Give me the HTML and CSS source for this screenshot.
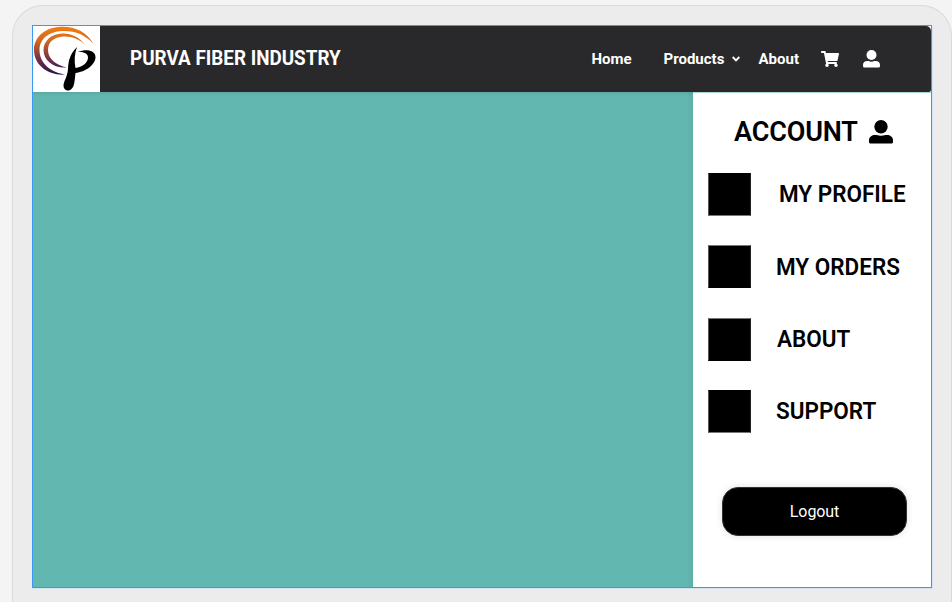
FILE: index.html
```html
<!DOCTYPE html>
<html lang="en">
<head>
<meta charset="utf-8">
<title>Purva Fiber Industry</title>
<link rel="stylesheet" href="styles.css">
</head>
<body>
<div class="device">
  <div class="screen">
    <header class="navbar">
      <svg class="logo" viewBox="0 0 67 66" role="img" aria-label="Purva logo">
        <defs>
          <linearGradient id="swirl" gradientUnits="userSpaceOnUse" x1="0" y1="0" x2="0" y2="49">
            <stop offset="0" stop-color="#f57c10"/>
            <stop offset=".3" stop-color="#d2691e"/>
            <stop offset=".68" stop-color="#71304a"/>
            <stop offset="1" stop-color="#25104f"/>
          </linearGradient>
        </defs>
        <path fill="url(#swirl)" d="M60.500 18C54 6 42 .3 28 .8C12 1.500 1 11 1 24C1 39 15 50 33 48.500C19 47 6.500 38 6.500 24C6.500 13 16 5.500 29 5C42 4.500 53 9 60.500 18Z"/>
        <path fill="url(#swirl)" d="M52.500 19C46 11 38 7 29 7.500C18 8 10.500 15 10.500 24C10.500 34 20 42.500 34 41.500C23 39 15 33 15 24C15 16 21 11 30 10.500C39 10 46 13 52.500 19Z"/>
        <path d="M44 21C36 29 35.500 36 35 43C34.500 51 30.500 55 30.500 60C30.500 63 33 65 36 64.500C42 63 41.500 54 42.500 47C52 46 62.500 39 62.500 31C62.500 24 53 22.500 45 26C52 25.500 55 28 55 31.500C55 37 49 41 42.500 42C41 35 41.500 28 44 21Z"/>
      </svg>
      <h1 class="brand">PURVA FIBER INDUSTRY</h1>
      <nav class="links">
        <a class="home">Home</a>
        <a class="products">Products</a>
        <svg class="chevron" viewBox="0 0 8 6"><path d="M.7 1L4 4.300L7.300 1"/></svg>
        <a class="about">About</a>
        <svg class="cart" viewBox="0 0 576 512"><path d="M528.100 301.300l47.300-208C578.800 78.300 567.400 64 552 64H159.200l-9.200-44.800C147.800 8 137.900 0 126.500 0H24C10.700 0 0 10.700 0 24v16c0 13.300 10.700 24 24 24h69.900l70.200 343.400C147.300 417.100 136 435.200 136 456c0 30.900 25.100 56 56 56s56-25.100 56-56c0-15.700-6.400-29.800-16.800-40h209.600C430.400 426.200 424 440.300 424 456c0 30.900 25.100 56 56 56s56-25.100 56-56c0-22.200-12.900-41.300-31.600-50.400l5.500-24.300c3.400-15-8-29.300-23.400-29.300H218.100l-6.500-32h293.100c11.200 0 20.900-7.800 23.400-18.700z"/></svg>
        <svg class="nav-user" viewBox="0 0 17 18"><circle cx="8.500" cy="5" r="5"/><path d="M0 16V15C0 12.300 1.800 11 4.300 11H5.500Q8.500 12.500 11.500 11H12.700C15.200 11 17 12.300 17 15V16Q17 17.500 15.500 17.500H1.500Q0 17.500 0 16Z"/></svg>
      </nav>
    </header>
    <main class="content">
      <section class="canvas"></section>
      <aside class="account">
        <div class="account-head">
          <h2 class="account-title">ACCOUNT</h2>
          <svg class="account-user" viewBox="0 0 24 24"><circle cx="12" cy="6.700" r="6.700"/><path d="M0 22V20C0 17 3 15 6 15H7.500Q12 16.500 16.500 15H18C21 15 24 17 24 20V22Q24 23.500 22.500 23.500H1.500Q0 23.500 0 22Z"/></svg>
        </div>
        <ul class="menu">
          <li class="item"><span class="tile tile-bottom"></span><span class="label profile">MY PROFILE</span></li>
          <li class="item"><span class="tile tile-top"></span><span class="label orders">MY ORDERS</span></li>
          <li class="item"><span class="tile tile-top"></span><span class="label info">ABOUT</span></li>
          <li class="item"><span class="tile tile-bottom"></span><span class="label support">SUPPORT</span></li>
        </ul>
        <button class="logout" type="button">Logout</button>
      </aside>
    </main>
  </div>
</div>
</body>
</html>
```

FILE: styles.css
```css
* { box-sizing: border-box; }
body {
  margin: 0;
  height: 602px;
  padding: 5px 0 0 12px;
  overflow: hidden;
  background: #f4f4f4;
  font-family: Roboto, "Liberation Sans", sans-serif;
}
.device {
  width: 940px;
  height: 597px;
  padding: 19px 19px 0;
  border: 1px solid #dadada;
  border-bottom: 0;
  border-radius: 31px 31px 0 0;
  background: #ececec;
}
.screen {
  width: 900px;
  height: 563px;
  border: 1px solid #3b98f3;
  background: #fff;
  box-shadow: 1px 1px 0 #d3e3f3;
  display: flex;
  flex-direction: column;
}
.navbar {
  height: 66px;
  flex: none;
  display: flex;
  align-items: center;
  background: #29292b;
  border-radius: 0 5px 2px 0;
  color: #fff;
}
.logo { width: 67px; height: 66px; background: #fff; flex: none; }
.brand {
  margin: 0 0 3px 30px;
  width: 420px;
  font-size: 20px;
  line-height: 24px;
  font-weight: 700;
  white-space: nowrap;
  transform: scaleX(.942);
  transform-origin: left;
}
.links { display: flex; align-items: center; height: 66px; font-size: 15px; font-weight: 700; line-height: 20px; white-space: nowrap; }
.home { width: 72px; margin-left: 41.500px; }
.products { width: 68px; }
.chevron { width: 8px; height: 6px; margin-right: 19px; fill: none; stroke: #fff; stroke-width: 1.9; }
.about { width: 62px; }
.cart { width: 18px; height: 16px; margin-right: 24px; fill: #fff; flex: none; }
.nav-user { width: 17px; height: 18px; fill: #fff; flex: none; }
.content { flex: 1; display: flex; border-top: 1px solid #a9d6d0; }
.canvas { width: 660px; flex: none; margin-top: -1px; background: linear-gradient(to right, transparent 654px, rgba(0,0,0,.06)), linear-gradient(rgba(0,0,0,.08), transparent 4px), #62b8b0; }
.account { flex: 1; padding: 22px 0 0 15px; color: #000; }
.account-head { display: flex; height: 34px; margin-left: 26px; align-items: center; }
.account-title { margin: 0; width: 135px; font-size: 27px; line-height: 34px; font-weight: 600; letter-spacing: -.15px; }
.account-user { width: 24px; height: 24px; }
.menu { margin: 24px 0 0; padding: 0; list-style: none; display: grid; grid-template-rows: 72px 73px 72px 43px; }
.item { display: flex; height: 43px; align-items: center; }
.tile { width: 43px; height: 43px; background: #000; border: 1px solid #222; border-left-color: #555; }
.tile-bottom { border-bottom-color: #777; border-top-color: #000; }
.tile-top { border-top-color: #777; border-bottom-color: #000; }
.label {
  font-size: 24px;
  line-height: 30px;
  font-weight: 600;
  white-space: nowrap;
  margin-left: 25px;
  margin-bottom: 2px;
  transform: scaleX(.937);
  transform-origin: left;
}
.profile { margin-left: 27.500px; }
.orders { margin-bottom: 0; }
.info { margin-left: 26px; }
.logout {
  display: block;
  width: 185px;
  height: 49px;
  margin: 54px 0 0 14px;
  padding: 0;
  border: 1px solid #333;
  border-radius: 16px;
  background: #000;
  color: #fff;
  font: 400 16px/20px Roboto, sans-serif;
  letter-spacing: -.1px;
  box-shadow: 0 0 7px rgba(0,0,0,.12);
}
```
